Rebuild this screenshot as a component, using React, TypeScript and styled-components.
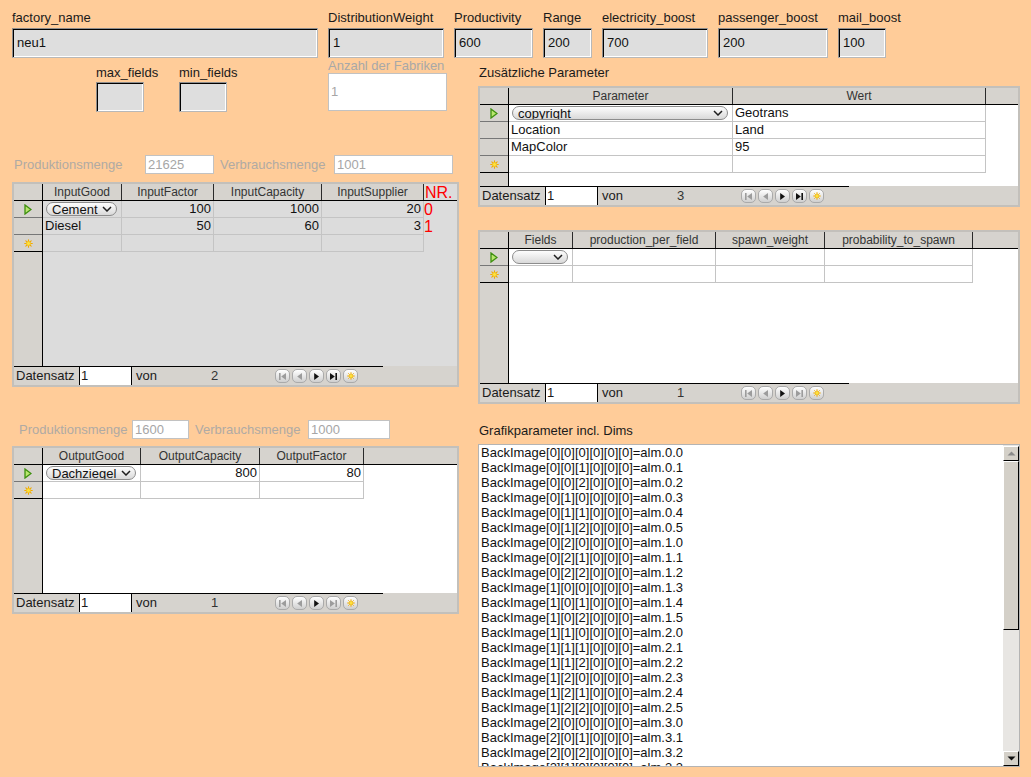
import React from 'react';
import styled, { createGlobalStyle } from 'styled-components';

type Align = 'left' | 'right';
interface Col { title: string; w: number; align?: Align }
type CellVal = string | { combo: string };

const GlobalStyle = createGlobalStyle`
  html, body { margin: 0; padding: 0; background: #ffcc99; }
  body {
    font-family: "Liberation Sans", Arial, sans-serif;
    font-size: 13px;
    color: #111;
    overflow: hidden;
  }
`;

/* ---------- icons ---------- */

const CurrentMark = () => (
  <svg width="8" height="11" viewBox="0 0 8 11">
    <polygon points="1,1 7,5.5 1,10" fill="#b9e66e" stroke="#3d8f0e" strokeWidth="1.3" />
  </svg>
);

const Sun = ({ size = 9 }: { size?: number }) => (
  <svg width={size} height={size} viewBox="0 0 10 10">
    <g stroke="#f2a900" strokeWidth="1.2" strokeLinecap="round">
      <line x1="5" y1="0.8" x2="5" y2="2.2" />
      <line x1="5" y1="7.8" x2="5" y2="9.2" />
      <line x1="0.8" y1="5" x2="2.2" y2="5" />
      <line x1="7.8" y1="5" x2="9.2" y2="5" />
      <line x1="2" y1="2" x2="3" y2="3" />
      <line x1="7" y1="7" x2="8" y2="8" />
      <line x1="8" y1="2" x2="7" y2="3" />
      <line x1="2" y1="8" x2="3" y2="7" />
    </g>
    <circle cx="5" cy="5" r="2.3" fill="#ffe23a" stroke="#f0b400" strokeWidth="0.8" />
  </svg>
);

const Chevron = () => (
  <svg width="10" height="6" viewBox="0 0 10 6">
    <polyline points="1,1 5,5 9,1" fill="none" stroke="#1e1e1e" strokeWidth="1.5" />
  </svg>
);

const NavIcon = ({ kind, off }: { kind: 'first' | 'prev' | 'next' | 'last'; off?: boolean }) => {
  const c = off ? '#9c9c9c' : '#111';
  return (
    <svg width="9" height="9" viewBox="0 0 9 9">
      {kind === 'first' && <><rect x="1" y="1" width="1.6" height="7" fill={c} /><polygon points="8,1 3.2,4.5 8,8" fill={c} /></>}
      {kind === 'prev' && <polygon points="7,1 2.2,4.5 7,8" fill={c} />}
      {kind === 'next' && <polygon points="2.2,1 7,4.5 2.2,8" fill={c} />}
      {kind === 'last' && <><polygon points="1,1 5.8,4.5 1,8" fill={c} /><rect x="6.4" y="1" width="1.6" height="7" fill={c} /></>}
    </svg>
  );
};

const ScrollArrow = ({ up, off }: { up?: boolean; off?: boolean }) => (
  <svg width="9" height="5" viewBox="0 0 9 5">
    <polygon points={up ? '0.5,4.5 4.5,0.5 8.5,4.5' : '0.5,0.5 4.5,4.5 8.5,0.5'} fill={off ? '#8a8a8a' : '#111'} />
  </svg>
);

/* ---------- page layout ---------- */

const Page = styled.div`
  width: 1031px;
  height: 777px;
  box-sizing: border-box;
  padding-left: 12px;
  overflow: hidden;
`;

const TopRow = styled.div`
  display: flex;
  gap: 10px;
  padding-top: 10px;
`;

const Columns = styled.div`
  display: flex;
  gap: 19px;
`;

const LeftCol = styled.div`
  width: 447px;
  display: flex;
  flex-direction: column;
`;

const RightCol = styled.div`
  width: 542px;
  display: flex;
  flex-direction: column;
`;

const Group = styled.div<{ $ml?: number; $mt?: number; $w?: number }>`
  display: flex;
  flex-direction: column;
  flex-shrink: 0;
  margin-left: ${p => p.$ml ?? 0}px;
  margin-top: ${p => p.$mt ?? 0}px;
  ${p => (p.$w ? `width: ${p.$w}px;` : '')}
`;

const Label = styled.div<{ $grey?: boolean; $gap?: number; $lh?: number }>`
  font-size: 13px;
  line-height: ${p => p.$lh ?? 15}px;
  height: ${p => p.$lh ?? 15}px;
  margin-bottom: ${p => p.$gap ?? 3}px;
  white-space: nowrap;
  color: ${p => (p.$grey ? '#a8a8a8' : '#1a1a1a')};
`;

const Sunken = styled.div<{ $w: number }>`
  width: ${p => p.$w}px;
  height: 30px;
  box-sizing: border-box;
  background: #dedede;
  border: 1px solid;
  border-color: #8e8e8e #b8b8b8 #b8b8b8 #8e8e8e;
  box-shadow: inset 1px 1px 0 #000, inset -1px -1px 0 #fff;
  padding-left: 4px;
  font-size: 13px;
  line-height: 28px;
  color: #111;
`;

const Flat = styled.div<{ $w: number; $h: number }>`
  width: ${p => p.$w}px;
  height: ${p => p.$h}px;
  flex-shrink: 0;
  box-sizing: border-box;
  background: #fff;
  border: 1px solid #c2c2c2;
  padding-left: 2px;
  font-size: 13px;
  line-height: ${p => p.$h - 2}px;
  color: #a6a6a6;
`;

const Row2 = styled.div`
  display: flex;
  align-items: flex-start;
  height: 54px;
`;

const MengeRow = styled.div<{ $mt: number }>`
  display: flex;
  align-items: center;
  height: 19px;
  margin-top: ${p => p.$mt}px;
`;

const MengeLabel = styled.div<{ $w: number; $ml: number }>`
  width: ${p => p.$w}px;
  flex-shrink: 0;
  margin-left: ${p => p.$ml}px;
  color: #b0aaa4;
  font-size: 13px;
  white-space: nowrap;
`;

const SectionLabel = styled.div<{ $mt: number }>`
  margin-top: ${p => p.$mt}px;
  padding-left: 1px;
  font-size: 13px;
  line-height: 15px;
  color: #1a1a1a;
`;

const Spaced = styled.div<{ $mt: number }>`
  margin-top: ${p => p.$mt}px;
`;

/* ---------- table control ---------- */

const Frame = styled.div<{ $h: number }>`
  height: ${p => p.$h}px;
  box-sizing: border-box;
  border: 2px solid #c3c0bb;
  display: flex;
  flex-direction: column;
  background: #d6d3ce;
`;

const HeadRow = styled.div`
  display: flex;
  height: 17px;
  flex-shrink: 0;
  box-sizing: border-box;
  border-bottom: 1px solid #000;
`;

const Corner = styled.div`
  width: 29px;
  flex-shrink: 0;
  box-sizing: border-box;
  border-right: 1px solid #000;
`;

const HeadCell = styled.div<{ $w: number }>`
  width: ${p => p.$w}px;
  flex-shrink: 0;
  box-sizing: border-box;
  border-right: 1px solid #2a2a2a;
  font-size: 12px;
  line-height: 16px;
  text-align: center;
  color: #333;
  white-space: nowrap;
  overflow: hidden;
`;

const NrHead = styled.div<{ $w: number }>`
  width: ${p => p.$w}px;
  flex-shrink: 0;
  background: #dcdcdc;
  color: #f00;
  font-size: 16px;
  line-height: 17px;
  padding-left: 1px;
  box-sizing: border-box;
  white-space: nowrap;
`;

const HeadFill = styled.div`
  flex: 1;
`;

const Body = styled.div`
  flex: 1;
  display: flex;
  min-height: 0;
`;

const RowHeads = styled.div`
  width: 29px;
  flex-shrink: 0;
  box-sizing: border-box;
  border-right: 1px solid #000;
`;

const RowHead = styled.div<{ $last?: boolean }>`
  height: 17px;
  box-sizing: border-box;
  border-bottom: 1px solid ${p => (p.$last ? '#000' : '#777')};
  display: flex;
  align-items: center;
  justify-content: center;
`;

const DataArea = styled.div<{ $grey?: boolean }>`
  flex: 1;
  background: ${p => (p.$grey ? '#dcdcdc' : '#fff')};
`;

const DataRow = styled.div`
  display: flex;
  height: 17px;
`;

const Cell = styled.div<{ $w: number; $align?: Align }>`
  width: ${p => p.$w}px;
  flex-shrink: 0;
  box-sizing: border-box;
  border-right: 1px solid #c4c4c4;
  border-bottom: 1px solid #c4c4c4;
  padding: 0 2px;
  display: flex;
  align-items: center;
  justify-content: ${p => (p.$align === 'right' ? 'flex-end' : 'flex-start')};
  font-size: 13px;
  line-height: 16px;
  white-space: nowrap;
  overflow: hidden;
  color: #111;
`;

const NrCell = styled.div<{ $w: number }>`
  width: ${p => p.$w}px;
  flex-shrink: 0;
  color: #f00;
  font-size: 16px;
  line-height: 17px;
  white-space: nowrap;
`;

const Combo = styled.div`
  flex: 1;
  height: 14px;
  margin: 0 2px 0 1px;
  box-sizing: border-box;
  border: 1px solid #8c8c8c;
  border-radius: 7px;
  background: linear-gradient(#fdfdfd, #d9d9d9);
  display: flex;
  align-items: flex-start;
  padding: 0 4px 0 5px;
  overflow: hidden;
`;

const ComboText = styled.span`
  font-size: 13px;
  line-height: 14px;
  color: #111;
`;

const ComboArrow = styled.span`
  margin-left: auto;
  padding-left: 2px;
  align-self: center;
  display: flex;
`;

const Nav = styled.div`
  height: 19px;
  flex-shrink: 0;
  display: flex;
  background: #d6d3ce;
`;

const NavMain = styled.div`
  width: 369px;
  box-sizing: border-box;
  border-top: 1px solid #000;
  display: flex;
  align-items: stretch;
  font-size: 13px;
  line-height: 18px;
  color: #1a1a1a;
`;

const NavLabel = styled.div`
  width: 65px;
  box-sizing: border-box;
  padding-left: 2px;
`;

const NavInput = styled.div`
  width: 53px;
  box-sizing: border-box;
  background: #fff;
  border-left: 1px solid #000;
  border-right: 1px solid #000;
  padding-left: 1px;
`;

const NavVon = styled.div`
  width: 79px;
  box-sizing: border-box;
  padding-left: 4px;
`;

const NavCount = styled.div`
  width: 64px;
  color: #333;
`;

const NavButtons = styled.div`
  display: flex;
  align-items: center;
  gap: 2px;
`;

const NavButton = styled.div`
  width: 15px;
  height: 14px;
  box-sizing: border-box;
  border: 1px solid #aaa;
  border-radius: 5px;
  background: linear-gradient(#ffffff, #cfcfcf);
  display: flex;
  align-items: center;
  justify-content: center;
`;

interface GridProps {
  h: number;
  cols: Col[];
  rows: CellVal[][];
  grey?: boolean;
  count: number;
  lastOff?: boolean;
  nr?: { head: string; vals: string[]; w: number };
}

function renderCell(v: CellVal | undefined) {
  if (v === undefined || v === '') return null;
  if (typeof v === 'string') return v;
  return (
    <Combo>
      <ComboText>{v.combo}</ComboText>
      <ComboArrow><Chevron /></ComboArrow>
    </Combo>
  );
}

function DataGrid({ h, cols, rows, grey, count, lastOff, nr }: GridProps) {
  const all: CellVal[][] = [...rows, cols.map(() => '')];
  return (
    <Frame $h={h}>
      <HeadRow>
        <Corner />
        {cols.map(c => <HeadCell key={c.title} $w={c.w}>{c.title}</HeadCell>)}
        {nr && <NrHead $w={nr.w}>{nr.head}</NrHead>}
        <HeadFill />
      </HeadRow>
      <Body>
        <RowHeads>
          {rows.map((_, i) => (
            <RowHead key={i}>{i === 0 && <CurrentMark />}</RowHead>
          ))}
          <RowHead $last><Sun /></RowHead>
        </RowHeads>
        <DataArea $grey={grey}>
          {all.map((r, i) => (
            <DataRow key={i}>
              {cols.map((c, j) => (
                <Cell key={j} $w={c.w} $align={c.align}>{renderCell(r[j])}</Cell>
              ))}
              {nr && <NrCell $w={nr.w}>{nr.vals[i] ?? ''}</NrCell>}
            </DataRow>
          ))}
        </DataArea>
      </Body>
      <Nav>
        <NavMain>
          <NavLabel>Datensatz</NavLabel>
          <NavInput>1</NavInput>
          <NavVon>von</NavVon>
          <NavCount>{count}</NavCount>
          <NavButtons>
            <NavButton><NavIcon kind="first" off /></NavButton>
            <NavButton><NavIcon kind="prev" off /></NavButton>
            <NavButton><NavIcon kind="next" /></NavButton>
            <NavButton><NavIcon kind="last" off={lastOff} /></NavButton>
            <NavButton><Sun size={8} /></NavButton>
          </NavButtons>
        </NavMain>
      </Nav>
    </Frame>
  );
}

/* ---------- text area ---------- */

const TextBox = styled.div`
  margin-top: 6px;
  width: 542px;
  height: 323px;
  box-sizing: border-box;
  border: 1px solid #b4b4b4;
  background: #fff;
  display: flex;
  overflow: hidden;
`;

const TextLines = styled.div`
  flex: 1;
  padding-left: 2px;
  font-size: 13px;
  line-height: 15px;
  white-space: pre;
  overflow: hidden;
  color: #111;
`;

const ScrollBar = styled.div`
  width: 16px;
  flex-shrink: 0;
  display: flex;
  flex-direction: column;
  background: #e8e6e3;
  padding-top: 1px;
  box-sizing: border-box;
`;

const Bevel = styled.div<{ $h: number }>`
  height: ${p => p.$h}px;
  flex-shrink: 0;
  box-sizing: border-box;
  background: #d4d0c8;
  border: 1px solid;
  border-color: #fff #000 #000 #fff;
  display: flex;
  align-items: center;
  justify-content: center;
`;

const Track = styled.div`
  flex: 1;
`;

const grafikLines: string[] = [];
for (let a = 0; a < 3; a++)
  for (let b = 0; b < 3; b++)
    for (let c = 0; c < 3; c++) {
      const n = a * 9 + b * 3 + c;
      grafikLines.push(`BackImage[${a}][${b}][${c}][0][0][0]=alm.${Math.floor(n / 6)}.${n % 6}`);
    }

/* ---------- data ---------- */

const topFields = [
  { label: 'factory_name', w: 306, v: 'neu1' },
  { label: 'DistributionWeight', w: 116, v: '1' },
  { label: 'Productivity', w: 79, v: '600' },
  { label: 'Range', w: 49, v: '200' },
  { label: 'electricity_boost', w: 106, v: '700' },
  { label: 'passenger_boost', w: 110, v: '200' },
  { label: 'mail_boost', w: 48, v: '100' },
];

const inputCols: Col[] = [
  { title: 'InputGood', w: 79 },
  { title: 'InputFactor', w: 92, align: 'right' },
  { title: 'InputCapacity', w: 108, align: 'right' },
  { title: 'InputSupplier', w: 102, align: 'right' },
];

const outputCols: Col[] = [
  { title: 'OutputGood', w: 98 },
  { title: 'OutputCapacity', w: 119, align: 'right' },
  { title: 'OutputFactor', w: 104, align: 'right' },
];

const paramCols: Col[] = [
  { title: 'Parameter', w: 224 },
  { title: 'Wert', w: 253 },
];

const fieldCols: Col[] = [
  { title: 'Fields', w: 64 },
  { title: 'production_per_field', w: 143 },
  { title: 'spawn_weight', w: 109 },
  { title: 'probability_to_spawn', w: 148 },
];

export default function App() {
  return (
    <Page>
      <GlobalStyle />
      <TopRow>
        {topFields.map(f => (
          <Group key={f.label}>
            <Label>{f.label}</Label>
            <Sunken $w={f.w}>{f.v}</Sunken>
          </Group>
        ))}
      </TopRow>

      <Columns>
        <LeftCol>
          <Row2>
            <Group $ml={84} $mt={7} $w={48}>
              <Label $gap={2}>max_fields</Label>
              <Sunken $w={48} />
            </Group>
            <Group $ml={35} $mt={7} $w={48}>
              <Label $gap={2}>min_fields</Label>
              <Sunken $w={48} />
            </Group>
            <Group $ml={101} $mt={1} $w={119}>
              <Label $grey $gap={0} $lh={14}>Anzahl der Fabriken</Label>
              <Flat $w={119} $h={38}>1</Flat>
            </Group>
          </Row2>

          <MengeRow $mt={43}>
            <MengeLabel $ml={2} $w={131}>Produktionsmenge</MengeLabel>
            <Flat $w={69} $h={19}>21625</Flat>
            <MengeLabel $ml={6} $w={114}>Verbrauchsmenge</MengeLabel>
            <Flat $w={119} $h={19}>1001</Flat>
          </MengeRow>

          <Spaced $mt={8}>
            <DataGrid
              h={205}
              cols={inputCols}
              grey
              count={2}
              rows={[
                [{ combo: 'Cement' }, '100', '1000', '20'],
                ['Diesel', '50', '60', '3'],
              ]}
              nr={{ head: 'NR.', vals: ['0', '1'], w: 33 }}
            />
          </Spaced>

          <MengeRow $mt={33}>
            <MengeLabel $ml={7} $w={113}>Produktionsmenge</MengeLabel>
            <Flat $w={57} $h={19}>1600</Flat>
            <MengeLabel $ml={6} $w={113}>Verbrauchsmenge</MengeLabel>
            <Flat $w={82} $h={19}>1000</Flat>
          </MengeRow>

          <Spaced $mt={7}>
            <DataGrid
              h={168}
              cols={outputCols}
              count={1}
              lastOff
              rows={[[{ combo: 'Dachziegel' }, '800', '80']]}
            />
          </Spaced>
        </LeftCol>

        <RightCol>
          <SectionLabel $mt={7}>Zusätzliche Parameter</SectionLabel>
          <Spaced $mt={6}>
            <DataGrid
              h={121}
              cols={paramCols}
              count={3}
              rows={[
                [{ combo: 'copyright' }, 'Geotrans'],
                ['Location', 'Land'],
                ['MapColor', '95'],
              ]}
            />
          </Spaced>

          <Spaced $mt={23}>
            <DataGrid
              h={174}
              cols={fieldCols}
              count={1}
              lastOff
              rows={[[{ combo: '' }, '', '', '']]}
            />
          </Spaced>

          <SectionLabel $mt={19}>Grafikparameter incl. Dims</SectionLabel>
          <TextBox>
            <TextLines>{grafikLines.join('\n')}</TextLines>
            <ScrollBar>
              <Bevel $h={15}><ScrollArrow up off /></Bevel>
              <Bevel $h={169} />
              <Track />
              <Bevel $h={15}><ScrollArrow /></Bevel>
            </ScrollBar>
          </TextBox>
        </RightCol>
      </Columns>
    </Page>
  );
}
